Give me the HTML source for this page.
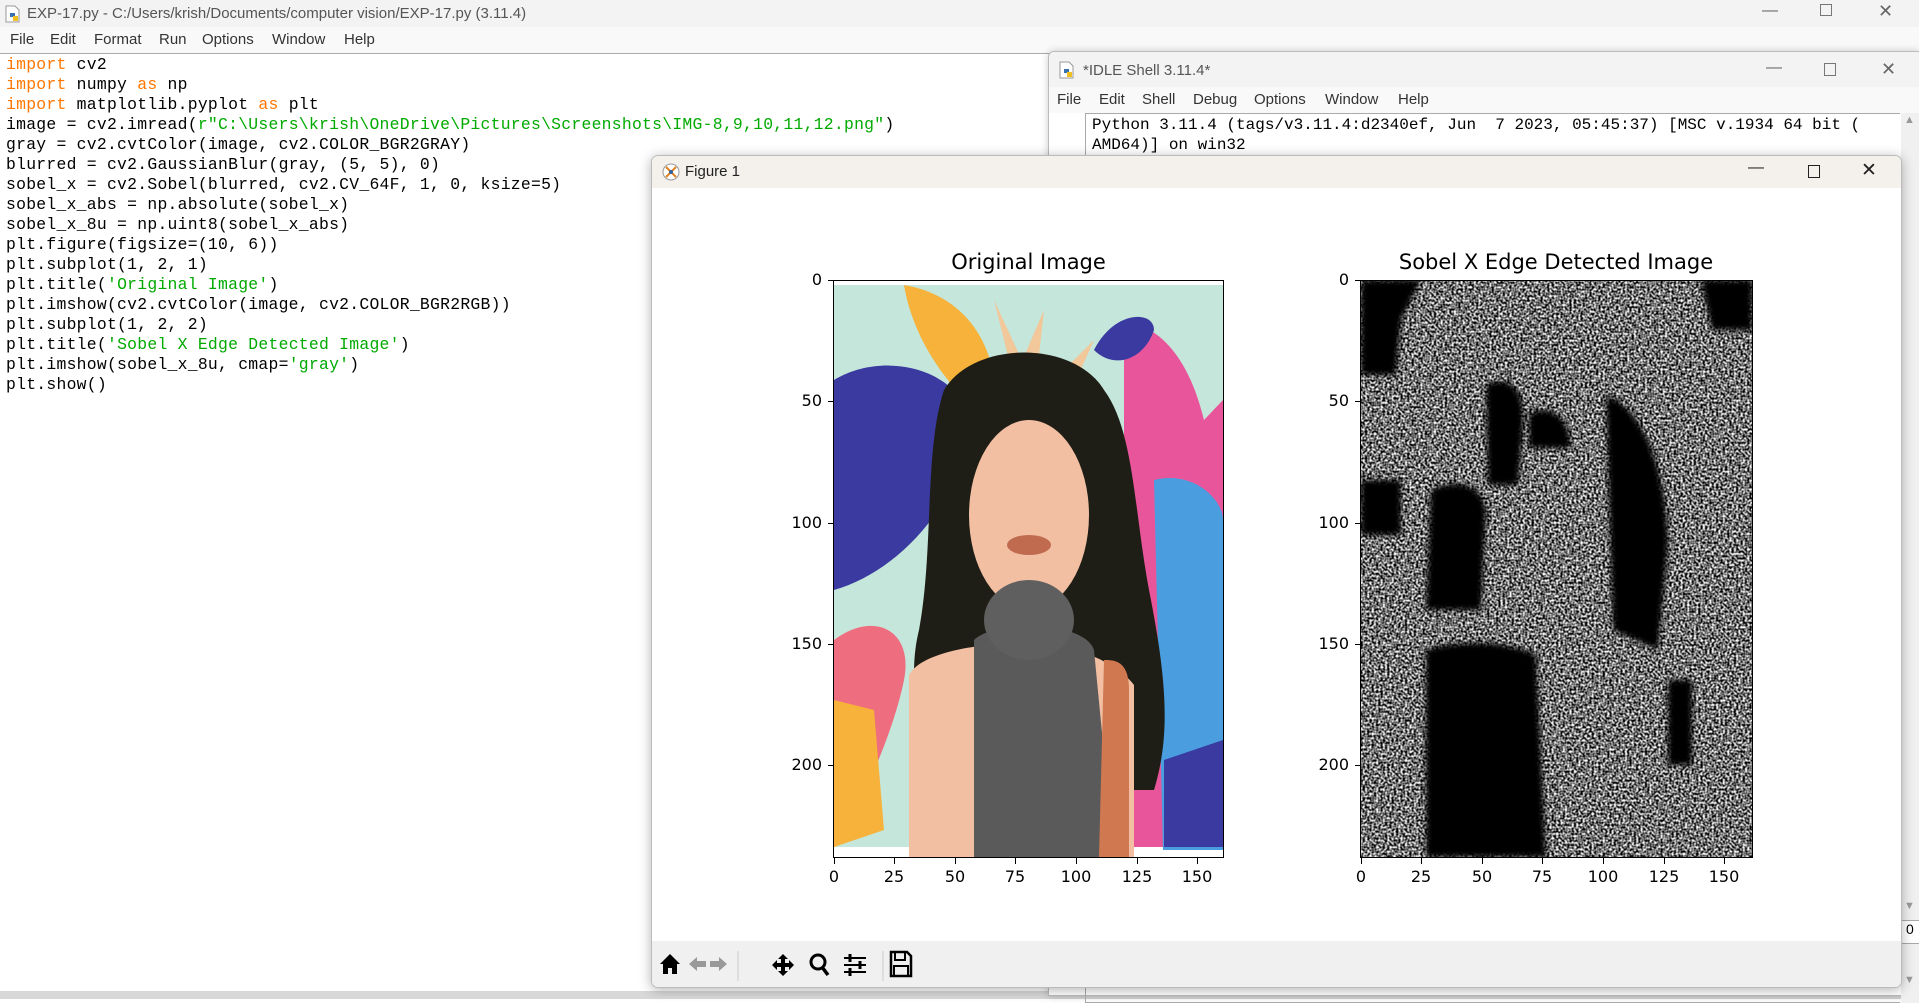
<!DOCTYPE html>
<html><head><meta charset="utf-8"><style>
*{margin:0;padding:0;box-sizing:border-box}
body{width:1919px;height:999px;overflow:hidden;background:#fff;position:relative;font-family:"Liberation Sans","DejaVu Sans",sans-serif}
.abs{position:absolute}
.mono{font-family:"Liberation Mono","DejaVu Sans Mono",monospace;white-space:pre}
.menu span{position:absolute;font-size:15px;color:#333;top:0}
.code{white-space:normal}
.code div{height:20px;line-height:20px;font-size:16.4px;color:#000;white-space:pre}
.k{color:#ff7700}.s{color:#00aa00}
.mpl{font-family:"DejaVu Sans",sans-serif;color:#000}
.yt{position:absolute;font-size:16px;text-align:right;width:50px;line-height:18px}
.xt{position:absolute;font-size:16px;text-align:center;width:50px;line-height:18px}
.tk{position:absolute;background:#000}
</style></head><body>
<div class="abs" style="left:0;top:0;width:1919px;height:27px;background:#f3f3f3"></div>
<svg class="abs" style="left:5px;top:5px" width="16" height="18" viewBox="0 0 16 18"><path d="M1 1h9l4 4v12H1z" fill="#fff" stroke="#999"/><path d="M5 8h5v4H5z" fill="#3a70b0"/><path d="M8 11h5v5H8z" fill="#f0c020"/></svg>
<div class="abs" style="left:27px;top:5px;font-size:15px;color:#555">EXP-17.py - C:/Users/krish/Documents/computer vision/EXP-17.py (3.11.4)</div>
<div class="abs" style="left:1762px;top:2px;font-size:16px;color:#666">—</div>
<div class="abs" style="left:1820px;top:4px;width:12px;height:12px;border:1px solid #777"></div>
<div class="abs" style="left:1878px;top:1px;font-size:18px;color:#666">✕</div>
<div class="abs menu" style="left:0;top:27px;width:1919px;height:26px;background:#f9f9f9">
<span style="left:10px;top:4px">File</span><span style="left:50px;top:4px">Edit</span><span style="left:94px;top:4px">Format</span><span style="left:159px;top:4px">Run</span><span style="left:202px;top:4px">Options</span><span style="left:272px;top:4px">Window</span><span style="left:344px;top:4px">Help</span></div>
<div class="abs" style="left:0;top:53px;width:1919px;height:1px;background:#aaa"></div>
<div class="abs mono code" style="left:6px;top:55px;letter-spacing:0.26px"><div><span class="k">import</span> cv2</div><div><span class="k">import</span> numpy <span class="k">as</span> np</div><div><span class="k">import</span> matplotlib.pyplot <span class="k">as</span> plt</div><div>image = cv2.imread(<span class="s">r"C:\Users\krish\OneDrive\Pictures\Screenshots\IMG-8,9,10,11,12.png"</span>)</div><div>gray = cv2.cvtColor(image, cv2.COLOR_BGR2GRAY)</div><div>blurred = cv2.GaussianBlur(gray, (5, 5), 0)</div><div>sobel_x = cv2.Sobel(blurred, cv2.CV_64F, 1, 0, ksize=5)</div><div>sobel_x_abs = np.absolute(sobel_x)</div><div>sobel_x_8u = np.uint8(sobel_x_abs)</div><div>plt.figure(figsize=(10, 6))</div><div>plt.subplot(1, 2, 1)</div><div>plt.title(<span class="s">'Original Image'</span>)</div><div>plt.imshow(cv2.cvtColor(image, cv2.COLOR_BGR2RGB))</div><div>plt.subplot(1, 2, 2)</div><div>plt.title(<span class="s">'Sobel X Edge Detected Image'</span>)</div><div>plt.imshow(sobel_x_8u, cmap=<span class="s">'gray'</span>)</div><div>plt.show()</div></div>
<div class="abs" style="left:0;top:991px;width:1919px;height:8px;background:#d8d8d8"></div>

<div class="abs" style="left:1048px;top:51px;width:871px;height:945px;background:#fff;border:1px solid #bbb;border-radius:6px 0 0 0;box-shadow:0 0 8px rgba(0,0,0,.2)">
 <div class="abs" style="left:0;top:0;width:870px;height:35px;background:#f3f3f3;border-radius:6px 0 0 0"></div>
 <svg class="abs" style="left:10px;top:9px" width="16" height="18" viewBox="0 0 16 18"><path d="M1 1h9l4 4v12H1z" fill="#fff" stroke="#999"/><path d="M5 8h5v4H5z" fill="#3a70b0"/><path d="M8 11h5v5H8z" fill="#f0c020"/></svg>
 <div class="abs" style="left:34px;top:10px;font-size:15px;color:#555">*IDLE Shell 3.11.4*</div>
 <div class="abs" style="left:717px;top:7px;font-size:16px;color:#666">—</div>
 <div class="abs" style="left:775px;top:11px;width:12px;height:13px;border:1px solid #777"></div>
 <div class="abs" style="left:832px;top:7px;font-size:18px;color:#666">✕</div>
 <div class="abs menu" style="left:0;top:35px;width:870px;height:26px;background:#f9f9f9">
 <span style="left:8px;top:4px">File</span><span style="left:50px;top:4px">Edit</span><span style="left:93px;top:4px">Shell</span><span style="left:144px;top:4px">Debug</span><span style="left:205px;top:4px">Options</span><span style="left:276px;top:4px">Window</span><span style="left:349px;top:4px">Help</span></div>
 <div class="abs" style="left:36px;top:61px;width:815px;height:890px;border:1px solid #aaa;border-right:none"></div>
 <div class="abs mono" style="left:43px;top:63px;font-size:16px;line-height:20px">Python 3.11.4 (tags/v3.11.4:d2340ef, Jun  7 2023, 05:45:37) [MSC v.1934 64 bit (
AMD64)] on win32</div>
 <div class="abs" style="left:852px;top:61px;width:19px;height:890px;background:#f0f0f0"></div>
 <div class="abs" style="left:855px;top:62px;font-size:11px;color:#999">▲</div>
 <div class="abs" style="left:855px;top:848px;font-size:11px;color:#999">▼</div>
 <div class="abs" style="left:852px;top:868px;width:19px;height:24px;background:#fff;border:1px solid #aaa;font-size:14px;padding-left:4px">0</div>
 <div class="abs" style="left:855px;top:922px;font-size:11px;color:#999">▼</div>
</div>

<div class="abs" style="left:651px;top:155px;width:1251px;height:833px;background:#fff;border:1px solid #bbb;border-radius:7px;box-shadow:0 2px 12px rgba(0,0,0,.3);overflow:hidden">
 <div class="abs" style="left:0;top:0;width:1251px;height:32px;background:#f4f1ed"></div>
 <svg class="abs" style="left:10px;top:7px" width="18" height="18" viewBox="0 0 18 18"><circle cx="9" cy="9" r="8" fill="#fff" stroke="#999"/><path d="M4 4l10 10M4 14l10-10" stroke="#e08020" stroke-width="2"/><circle cx="9" cy="9" r="2" fill="#3060a0"/></svg>
 <div class="abs" style="left:33px;top:7px;font-size:15px;color:#222">Figure 1</div>
 <div class="abs" style="left:1096px;top:3px;font-size:16px;color:#222">—</div>
 <div class="abs" style="left:1156px;top:9px;width:12px;height:13px;border:1.5px solid #222"></div>
 <div class="abs" style="left:1209px;top:3px;font-size:19px;color:#222">✕</div>
 <div class="abs" style="left:0;top:785px;width:1251px;height:48px;background:#f0f0f0"></div>
 <svg class="abs" style="left:0;top:790px" width="300" height="40">
  <path d="M8 18l10-10 10 10h-3v10h-5v-6h-4v6h-5V18z" fill="#000"/>
  <path d="M37 18l8-7v4h9v6h-9v4z" fill="#999"/>
  <path d="M75 18l-8-7v4h-9v6h9v4z" fill="#999"/>
  <line x1="86" y1="5" x2="86" y2="35" stroke="#ccc"/>
  <path d="M131 8l-5 5h3v4h-4v-3l-5 5 5 5v-3h4v4h-3l5 5 5-5h-3v-4h4v3l5-5-5-5v3h-4v-4h3z" fill="#000"/>
  <circle cx="166" cy="16" r="7" fill="none" stroke="#000" stroke-width="3"/><path d="M170 21l6 8" stroke="#000" stroke-width="3.5"/>
  <path d="M192 12h22M192 19h22M192 26h22" stroke="#000" stroke-width="2"/><path d="M198 8v8M208 15v8M198 22v8" stroke="#000" stroke-width="3"/>
  <line x1="231" y1="5" x2="231" y2="35" stroke="#ccc"/>
  <path d="M239 6h16l4 4v20h-20z" fill="none" stroke="#000" stroke-width="2.5"/><path d="M243 6v8h10V6M242 20h14v10h-14z" fill="none" stroke="#000" stroke-width="2"/>
 </svg>
</div>

<div class="abs mpl" style="left:834px;top:250px;width:389px;text-align:center;font-size:21px">Original Image</div>
<svg class="abs" style="left:834px;top:280px" width="389" height="577" viewBox="0 0 389 577">
 <rect width="389" height="577" fill="#fff"/>
 <rect x="0" y="5" width="389" height="562" fill="#c5e6da"/>
 <path d="M70 5c60 10 100 60 90 140-40-30-80-80-90-140z" fill="#f6b23a"/>
 <path d="M160 20l20 80 30-70-10 90 60-60-40 90z" fill="#f2c79a"/>
 <path d="M0 100c50-30 120-10 130 30 10 80-60 160-130 180z" fill="#3a3aa0"/>
 <path d="M0 360c40-30 80-10 70 40-10 50-40 120-70 167z" fill="#ee6d7e"/>
 <path d="M0 420l40 10 10 120-50 17z" fill="#f6b23a"/>
 <path d="M290 40c50 10 70 60 80 100l19-20v447h-99z" fill="#e9559a"/>
 <path d="M320 200c40-10 69 20 69 40v330h-60z" fill="#4a9ee0"/>
 <path d="M260 70c20-40 60-40 60-20-10 30-40 40-60 20z" fill="#3a3aa0"/>
 <path d="M330 480l59-20v107h-59z" fill="#3a3aa0"/>
 <path d="M110 110c30-50 130-50 160 0 30 40 30 120 45 200 20 100 20 150 5 200l-60 0-70-60-60 80c-40-40-60-120-45-180 15-80 5-180 25-240z" fill="#1f1e16"/>
 <ellipse cx="195" cy="235" rx="60" ry="95" fill="#f2bfa3"/>
 <path d="M75 395c10-20 60-30 90-30h40c40 0 80 20 95 40v172H75z" fill="#f2bfa3"/>
 <path d="M140 360c20-20 110-20 120 10l20 207H140z" fill="#5a5a5a"/>
 <ellipse cx="195" cy="340" rx="45" ry="40" fill="#5f5f5f"/>
 <path d="M270 380c10 0 25 0 25 30v167h-30z" fill="#d07850"/>
 <ellipse cx="195" cy="265" rx="22" ry="10" fill="#c06a50"/>
</svg>
<div class="abs" style="left:833px;top:280px;width:391px;height:578px;border:1px solid #000"></div>

<div class="abs mpl" style="left:1296px;top:250px;width:520px;text-align:center;font-size:21px">Sobel X Edge Detected Image</div>
<svg class="abs" style="left:1361px;top:280px" width="391" height="577" viewBox="0 0 391 577">
 <defs>
  <filter id="n" x="0" y="0" width="391" height="577" filterUnits="userSpaceOnUse" color-interpolation-filters="sRGB"><feTurbulence type="fractalNoise" baseFrequency="0.45" numOctaves="1" seed="3" result="t"/><feColorMatrix in="t" type="matrix" values="2.4 0 0 0 -0.75  2.4 0 0 0 -0.75  2.4 0 0 0 -0.75  0 0 0 0 1"/></filter>
  <filter id="b"><feGaussianBlur stdDeviation="3"/></filter>
 </defs>
 <rect width="391" height="577" fill="#000"/>
 <rect x="0" y="0" width="391" height="577" fill="#888" filter="url(#n)"/>
 <g fill="#000" filter="url(#b)">
 <path d="M0 0h60l-20 40-5 55h-35z"/>
 <path d="M340 0h51v50h-40z"/>
 <path d="M125 105c20-10 40 0 37 40l-5 60-30 0z"/>
 <path d="M70 210c20-10 50-10 55 20l-5 100-55 0z"/>
 <path d="M168 134c20-10 40 0 42 34l-42 0z"/>
 <path d="M245 115c30 10 60 60 62 150l-10 105-45-20z"/>
 <path d="M65 370c30-10 80-10 110 5l10 202h-120z"/>
 <path d="M307 400h24v85h-24z"/>
 <path d="M0 200h40v55h-40z"/>
 </g>
</svg>
<div class="abs" style="left:1360px;top:280px;width:393px;height:578px;border:1px solid #000"></div>

<div class="abs mpl">
 <div class="tk" style="left:828px;top:280px;width:6px;height:1px"></div><div class="yt" style="left:772px;top:271px">0</div>
 <div class="tk" style="left:828px;top:401px;width:6px;height:1px"></div><div class="yt" style="left:772px;top:392px">50</div>
 <div class="tk" style="left:828px;top:523px;width:6px;height:1px"></div><div class="yt" style="left:772px;top:514px">100</div>
 <div class="tk" style="left:828px;top:644px;width:6px;height:1px"></div><div class="yt" style="left:772px;top:635px">150</div>
 <div class="tk" style="left:828px;top:765px;width:6px;height:1px"></div><div class="yt" style="left:772px;top:756px">200</div>
 <div class="tk" style="left:1355px;top:280px;width:6px;height:1px"></div><div class="yt" style="left:1299px;top:271px">0</div>
 <div class="tk" style="left:1355px;top:401px;width:6px;height:1px"></div><div class="yt" style="left:1299px;top:392px">50</div>
 <div class="tk" style="left:1355px;top:523px;width:6px;height:1px"></div><div class="yt" style="left:1299px;top:514px">100</div>
 <div class="tk" style="left:1355px;top:644px;width:6px;height:1px"></div><div class="yt" style="left:1299px;top:635px">150</div>
 <div class="tk" style="left:1355px;top:765px;width:6px;height:1px"></div><div class="yt" style="left:1299px;top:756px">200</div>

 <div class="tk" style="left:834px;top:858px;width:1px;height:6px"></div><div class="xt" style="left:809px;top:868px">0</div>
 <div class="tk" style="left:894px;top:858px;width:1px;height:6px"></div><div class="xt" style="left:869px;top:868px">25</div>
 <div class="tk" style="left:955px;top:858px;width:1px;height:6px"></div><div class="xt" style="left:930px;top:868px">50</div>
 <div class="tk" style="left:1015px;top:858px;width:1px;height:6px"></div><div class="xt" style="left:990px;top:868px">75</div>
 <div class="tk" style="left:1076px;top:858px;width:1px;height:6px"></div><div class="xt" style="left:1051px;top:868px">100</div>
 <div class="tk" style="left:1137px;top:858px;width:1px;height:6px"></div><div class="xt" style="left:1112px;top:868px">125</div>
 <div class="tk" style="left:1197px;top:858px;width:1px;height:6px"></div><div class="xt" style="left:1172px;top:868px">150</div>

 <div class="tk" style="left:1361px;top:858px;width:1px;height:6px"></div><div class="xt" style="left:1336px;top:868px">0</div>
 <div class="tk" style="left:1421px;top:858px;width:1px;height:6px"></div><div class="xt" style="left:1396px;top:868px">25</div>
 <div class="tk" style="left:1482px;top:858px;width:1px;height:6px"></div><div class="xt" style="left:1457px;top:868px">50</div>
 <div class="tk" style="left:1542px;top:858px;width:1px;height:6px"></div><div class="xt" style="left:1517px;top:868px">75</div>
 <div class="tk" style="left:1603px;top:858px;width:1px;height:6px"></div><div class="xt" style="left:1578px;top:868px">100</div>
 <div class="tk" style="left:1664px;top:858px;width:1px;height:6px"></div><div class="xt" style="left:1639px;top:868px">125</div>
 <div class="tk" style="left:1724px;top:858px;width:1px;height:6px"></div><div class="xt" style="left:1699px;top:868px">150</div>
</div>
</body></html>
